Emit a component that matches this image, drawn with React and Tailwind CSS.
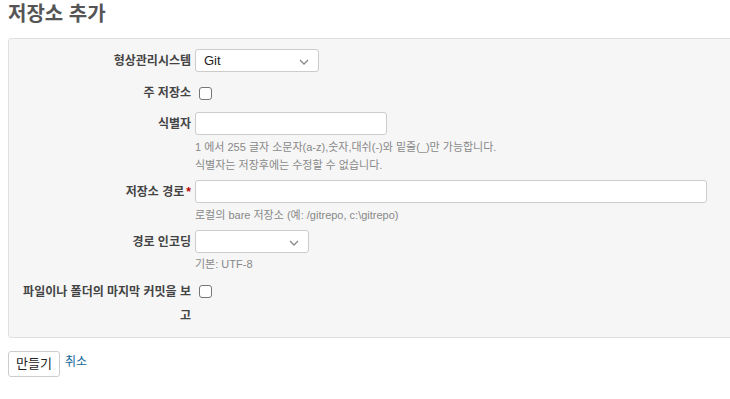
const FONT = "font-['Liberation_Sans','Noto_Sans_CJK_KR',sans-serif]"

function Chevron() {
  return (
    <svg width="10" height="6" viewBox="0 0 10 6" className="absolute right-[9px] top-[9px]">
      <path d="M1 1l4 4 4-4" fill="none" stroke="#888" strokeWidth="1.3" />
    </svg>
  )
}

function Row({ label, required, top, children, labelClass = '' }) {
  return (
    <div className={`flex items-start ${top}`}>
      <div className={`w-[186px] shrink-0 text-right font-bold text-[12px] leading-[24px] text-[#444] pr-[4px] ${labelClass}`}>
        {label}
        {required && <span className="text-[#bb0000] ml-[2px]">*</span>}
      </div>
      <div className="flex flex-col">{children}</div>
    </div>
  )
}

function Help({ children }) {
  return <div className="text-[11px] leading-[18px] text-[#888]">{children}</div>
}

export default function App() {
  return (
    <div className={`${FONT} bg-white w-[730px] h-[399px] overflow-hidden text-[12px] text-[#333]`}>
      <h2 className="text-[20px] font-bold text-[#555] leading-[24px] pl-[8px] pt-[2px]">저장소 추가</h2>
      <div className="ml-[8px] mt-[12px] w-[740px] h-[300px] bg-[#f6f6f6] border border-[#e0e0e0] rounded-[3px] pt-[10px]">
        <Row label="형상관리시스템">
          <div className="relative w-[124px] h-[23px] bg-white border border-[#ccc] rounded-[3px] text-[13px] leading-[21px] pl-[8px] text-[#222]">
            Git
            <Chevron />
          </div>
        </Row>
        <Row label="주 저장소" top="mt-[8px]">
          <div className="w-[13px] h-[13px] mt-[6px] ml-[4px] bg-white border border-[#767676] rounded-[3px]" />
        </Row>
        <Row label="식별자" top="mt-[7px]">
          <div className="w-[192px] h-[23px] bg-white border border-[#ccc] rounded-[3px]" />
          <div className="mt-[3px]">
            <Help>1 에서 255 글자 소문자(a-z),숫자,대쉬(-)와 밑줄(_)만 가능합니다.</Help>
            <Help>식별자는 저장후에는 수정할 수 없습니다.</Help>
          </div>
        </Row>
        <Row label="저장소 경로" required top="mt-[6px]">
          <div className="w-[512px] h-[23px] bg-white border border-[#ccc] rounded-[3px]" />
          <div className="mt-[3px]">
            <Help>로컬의 bare 저장소 (예: /gitrepo, c:\gitrepo)</Help>
          </div>
        </Row>
        <Row label="경로 인코딩" top="mt-[6px]">
          <div className="relative w-[114px] h-[23px] bg-white border border-[#ccc] rounded-[3px]">
            <Chevron />
          </div>
          <div className="mt-[2px]">
            <Help>기본: UTF-8</Help>
          </div>
        </Row>
        <Row label={<>파일이나 폴더의 마지막 커밋을 보<br />고</>} top="mt-[7px]" labelClass="leading-[22px]">
          <div className="w-[13px] h-[13px] mt-[5px] ml-[4px] bg-white border border-[#767676] rounded-[3px]" />
        </Row>
      </div>
      <div className="flex items-start ml-[8px] mt-[13px] text-[#169]">
        <div className="w-[52px] h-[26px] bg-white border border-[#ccc] rounded-[3px] text-[13px] leading-[24px] text-center text-[#222]">만들기</div>
        <a href="#" className="ml-[5px] text-[12px] leading-[22px] text-[#169]">취소</a>
      </div>
    </div>
  )
}
